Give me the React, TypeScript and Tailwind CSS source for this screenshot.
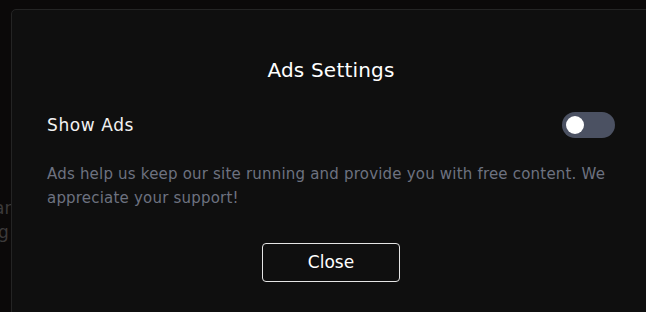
import { useState } from 'react';

const font = { fontFamily: '"DejaVu Sans", "Open Sans", sans-serif' };

function Toggle({ on, onChange }: { on: boolean; onChange: (v: boolean) => void }) {
  return (
    <button
      type="button"
      role="switch"
      aria-checked={on}
      onClick={() => onChange(!on)}
      className="flex h-[26px] w-[53px] items-center rounded-full bg-[#4b5162] px-[4px]"
    >
      <span
        className={
          on
            ? 'h-[18px] w-[18px] translate-x-[27px] rounded-full bg-white'
            : 'h-[18px] w-[18px] rounded-full bg-white'
        }
      />
    </button>
  );
}

export default function App() {
  const [showAds, setShowAds] = useState(false);

  return (
    <div className="relative h-[312px] w-[646px] overflow-hidden bg-[#0b0909]" style={font}>
      {/* page behind the backdrop */}
      <div className="absolute left-0 top-[196px] text-[17px] leading-[24px] text-[#3c3a3a]">
        <div className="-ml-[6px]">ar</div>
        <div className="-ml-[2px]">g</div>
      </div>

      <div className="relative ml-[11px] mt-[9px] w-[641px] rounded-[5px] border border-[#242424] bg-[#0f0f0f] pl-[35px] pr-[36px] pt-[46px] pb-[40px]">
        <h2 className="text-center text-[20px] font-medium leading-[28px] tracking-[0.2px] text-white">Ads Settings</h2>

        <div className="mt-[28px] flex items-center justify-between">
          <span className="text-[17px] leading-[26px] tracking-[0.6px] text-[#f2f2f2]">Show Ads</span>
          <Toggle on={showAds} onChange={setShowAds} />
        </div>

        <p className="mt-[24px] text-[15px] leading-[24px] tracking-[0.2px] text-[#6d7280]">
          Ads help us keep our site running and provide you with free content. We appreciate your support!
        </p>

        <div className="mt-[33px] flex justify-center">
          <button
            type="button"
            className="h-[39px] w-[138px] rounded-[4px] border border-[#e5e5e5] text-[17px] text-white"
          >
            Close
          </button>
        </div>
      </div>
    </div>
  );
}
